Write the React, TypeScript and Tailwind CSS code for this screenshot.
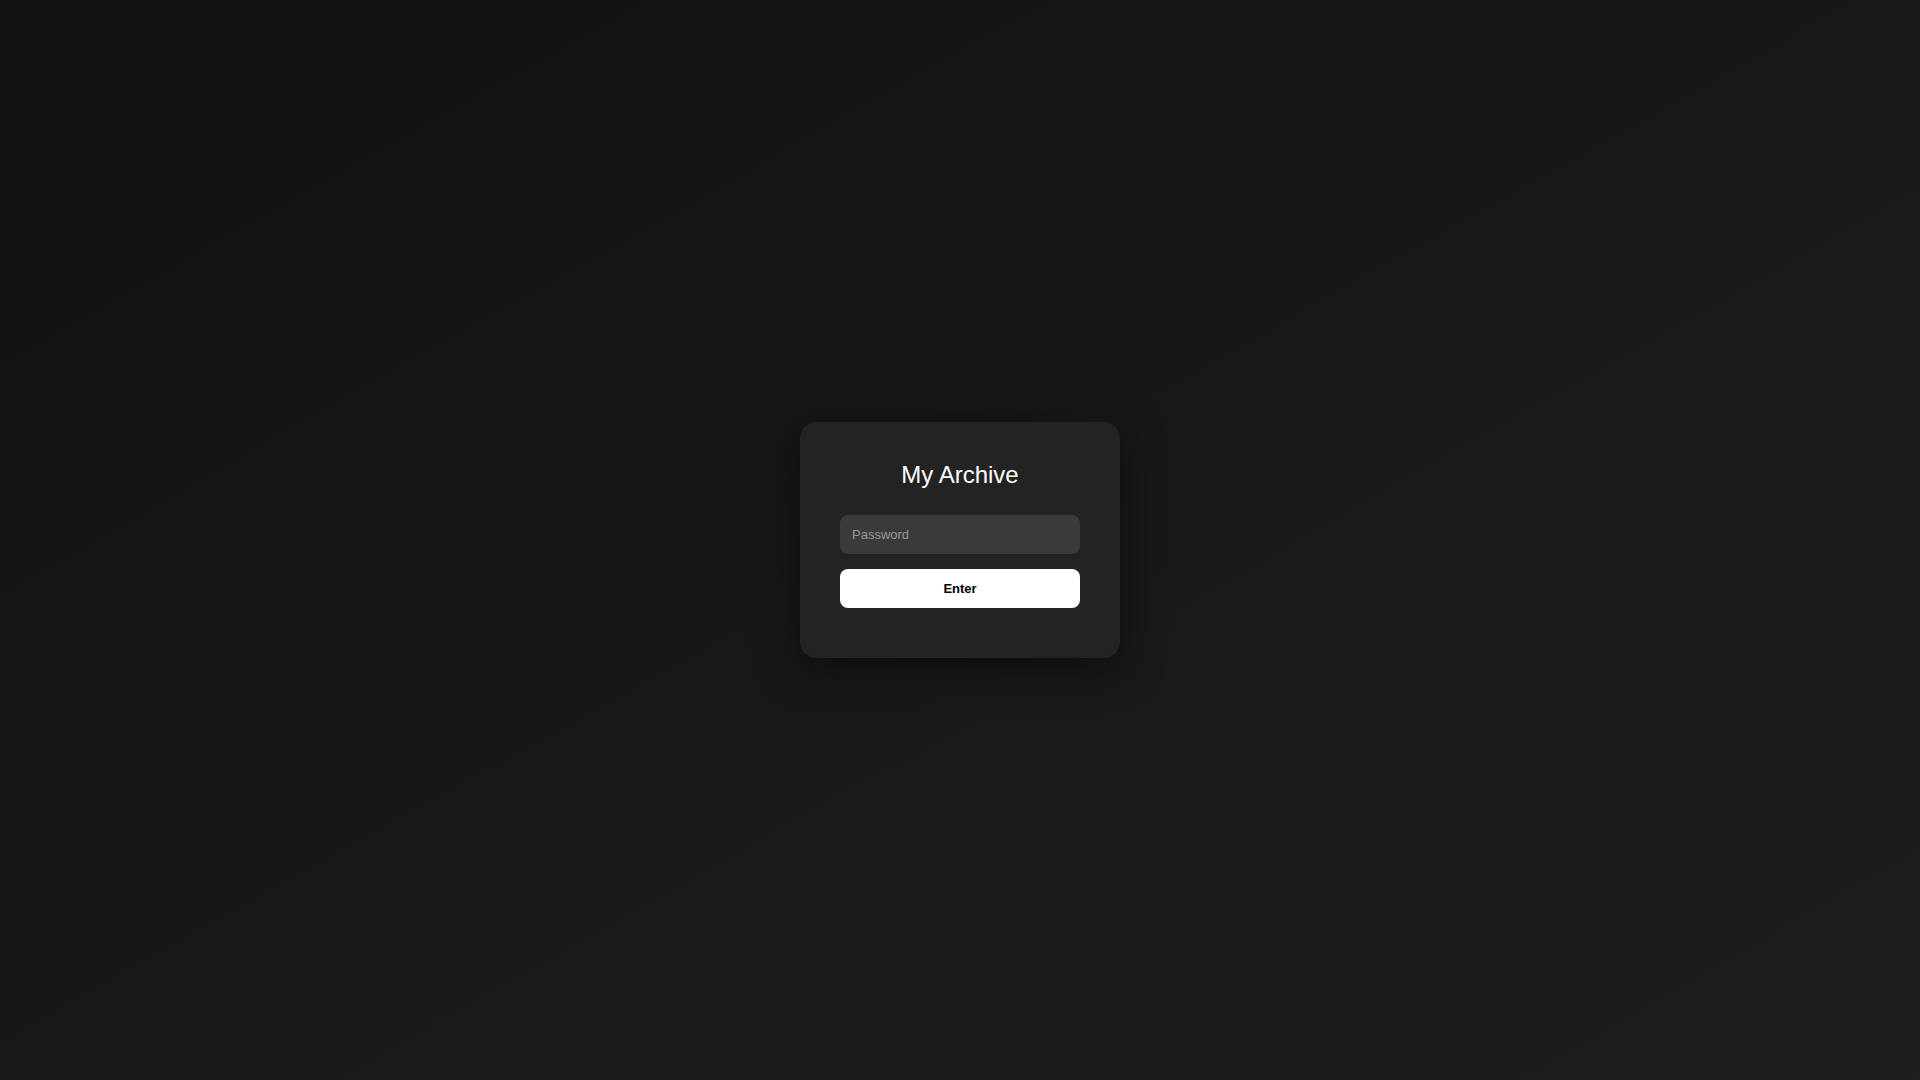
import React, { useState } from 'react';

const App: React.FC = () => {
  const [password, setPassword] = useState('');

  return (
    <div className="min-h-screen w-full flex items-center justify-center bg-gradient-to-br from-[#121212] to-[#1e1e1e] font-['Liberation_Sans',Arial,sans-serif]">
      {/* Login card */}
      <div className="w-[320px] rounded-2xl bg-[#232323] px-10 pt-[37px] pb-[50px] shadow-[0_10px_40px_rgba(0,0,0,0.5)]">
        <h1 className="text-center text-2xl leading-8 text-white font-normal mb-[24px]">My Archive</h1>
        <form
          className="flex flex-col gap-[15px]"
          onSubmit={(e) => e.preventDefault()}
        >
          <input
            type="password"
            value={password}
            onChange={(e) => setPassword(e.target.value)}
            placeholder="Password"
            className="h-[39px] w-full rounded-lg bg-[#3a3a3a] px-3 text-[13px] text-white placeholder:text-[#999] outline-none border-0"
          />
          <button
            type="submit"
            className="h-[39px] w-full rounded-lg bg-white text-[13px] font-bold text-black"
          >
            Enter
          </button>
        </form>
      </div>
    </div>
  );
};

export default App;
